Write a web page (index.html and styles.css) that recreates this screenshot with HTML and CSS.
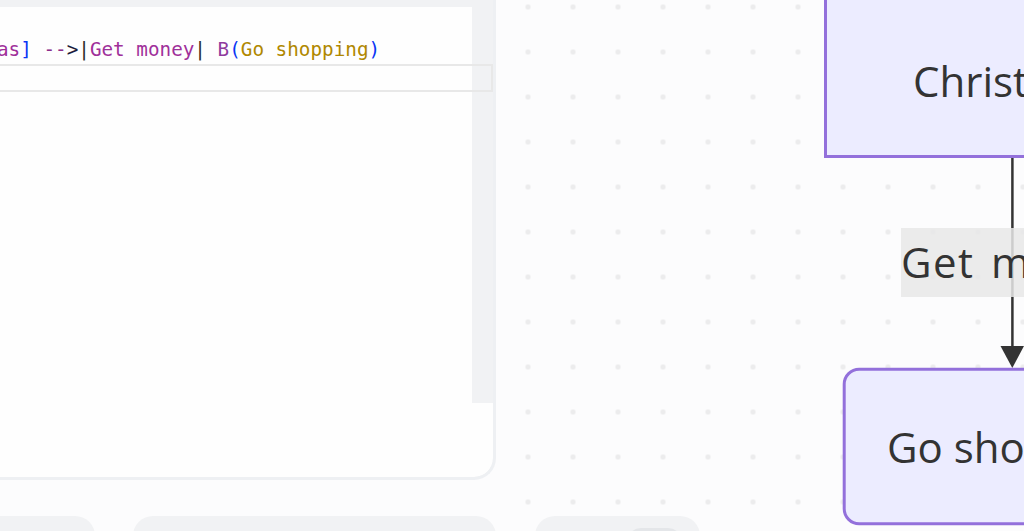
FILE: index.html
```html
<!DOCTYPE html>
<html lang="en">
<head>
<meta charset="utf-8">
<title>Mermaid editor</title>
<link rel="stylesheet" href="styles.css">
</head>
<body>
<div class="app">
  <section class="left">
    <div class="card">
      <div class="editor">
        <div class="scrolltrack"></div>
        <div class="code">
          <div class="line"><span class="t-node">as</span><span class="t-br">]</span> <span class="t-arrow">--</span><span class="t-gt">&gt;</span><span class="t-pipe">|</span><span class="t-node">Get money</span><span class="t-pipe">|</span> <span class="t-id">B</span><span class="t-br">(</span><span class="t-str">Go shopping</span><span class="t-br">)</span></div>
          <div class="line cur"></div>
        </div>
      </div>
    </div>
    <div class="toolbar">
      <div class="btn btn-a"></div>
      <div class="btn btn-b"></div>
    </div>
  </section>
  <section class="right">
    <svg class="diagram" width="528" height="531" viewBox="0 0 528 531" xmlns="http://www.w3.org/2000/svg">
      <rect class="node" x="329.5" y="-60" width="400" height="216.5"/>
      <text class="ntext" x="417" y="96.5">Christmas</text>
      <line class="edge" x1="516.4" y1="158" x2="516.4" y2="348"/>
      <rect class="elabel" x="405" y="228" width="220" height="69"/>
      <text class="ntext wide" x="405" y="277.5">Get money</text>
      <polygon class="arrow" points="504.5,346 528,346 516.3,368"/>
      <rect class="node" x="348.2" y="369.2" width="400" height="154.6" rx="15" ry="15"/>
      <text class="ntext" x="391" y="462.5">Go shopping</text>
    </svg>
    <div class="zoombar"><div class="pill"></div></div>
  </section>
</div>
</body>
</html>
```

FILE: styles.css
```css
html, body {
  margin: 0;
  padding: 0;
}
body {
  background: #fcfcfd;
  width: 1024px;
  height: 531px;
  overflow: hidden;
}
.app {
  display: flex;
  height: 531px;
}
.left {
  width: 496px;
  flex-shrink: 0;
  display: flex;
  flex-direction: column;
  gap: 36px;
}
.card {
  box-sizing: border-box;
  height: 480px;
  flex-shrink: 0;
  background: #f1f2f4;
  padding-top: 7px;
  border-right: 3px solid #eef0f3;
  border-bottom: 3px solid #eef0f3;
  border-bottom-right-radius: 22px;
  display: flex;
  flex-direction: column;
  overflow: hidden;
}
.editor {
  flex: 1;
  background: #fefefe;
  position: relative;
  border-bottom-right-radius: 19px;
}
.scrolltrack {
  position: absolute;
  top: 0;
  right: 0;
  width: 21px;
  height: 396px;
  background: #f1f2f4;
}
.code {
  position: relative;
  padding-top: 29px;
  font-family: "DejaVu Sans Mono", "Liberation Mono", monospace;
  font-size: 19.3px;
}
.line {
  height: 28px;
  line-height: 28px;
  text-indent: -3px;
  white-space: pre;
}
.cur {
  box-sizing: border-box;
  width: 493px;
  border: 2.5px solid #e8e8e8;
  border-left: none;
}
.t-node { color: #a0309a; }
.t-br { color: #0a36f5; }
.t-arrow { color: #8c2f8c; }
.t-gt { color: #1c1c3c; }
.t-pipe { color: #2a2a2a; }
.t-id { color: #8f3b9e; }
.t-str { color: #b08800; }

.toolbar {
  display: flex;
  gap: 38px;
  flex-shrink: 0;
}
.btn {
  height: 40px;
  background: #f1f2f4;
  border-radius: 20px;
}
.btn-a {
  width: 95px;
  border-top-left-radius: 0;
  border-bottom-left-radius: 0;
}
.btn-b {
  width: 363px;
}

.right {
  flex: 1;
  position: relative;
  overflow: hidden;
  background-color: #fcfcfd;
  background-image: radial-gradient(circle, #ececed 0, #ececed 2.4px, rgba(236,236,237,0) 2.9px);
  background-size: 45px 45px;
  background-position: 9.5px -15.5px;
}
.diagram {
  display: block;
}
.node {
  fill: #ececff;
  stroke: #9370db;
  stroke-width: 3;
}
.ntext {
  font-family: "Open Sans", "Noto Sans", sans-serif;
  font-size: 42px;
  fill: #333333;
}
.wide {
  letter-spacing: 1.5px;
  word-spacing: 4px;
}
.edge {
  stroke: #333333;
  stroke-width: 2.5;
}
.elabel {
  fill: rgba(232, 232, 232, 0.85);
}
.arrow {
  fill: #333333;
}
.zoombar {
  position: absolute;
  left: 39px;
  top: 516px;
  width: 165px;
  height: 40px;
  border-radius: 20px;
  background: #f1f2f4;
}
.pill {
  position: absolute;
  left: 92px;
  top: 12px;
  width: 55px;
  height: 30px;
  border-radius: 14px;
  background: #e4e6e9;
}
```
